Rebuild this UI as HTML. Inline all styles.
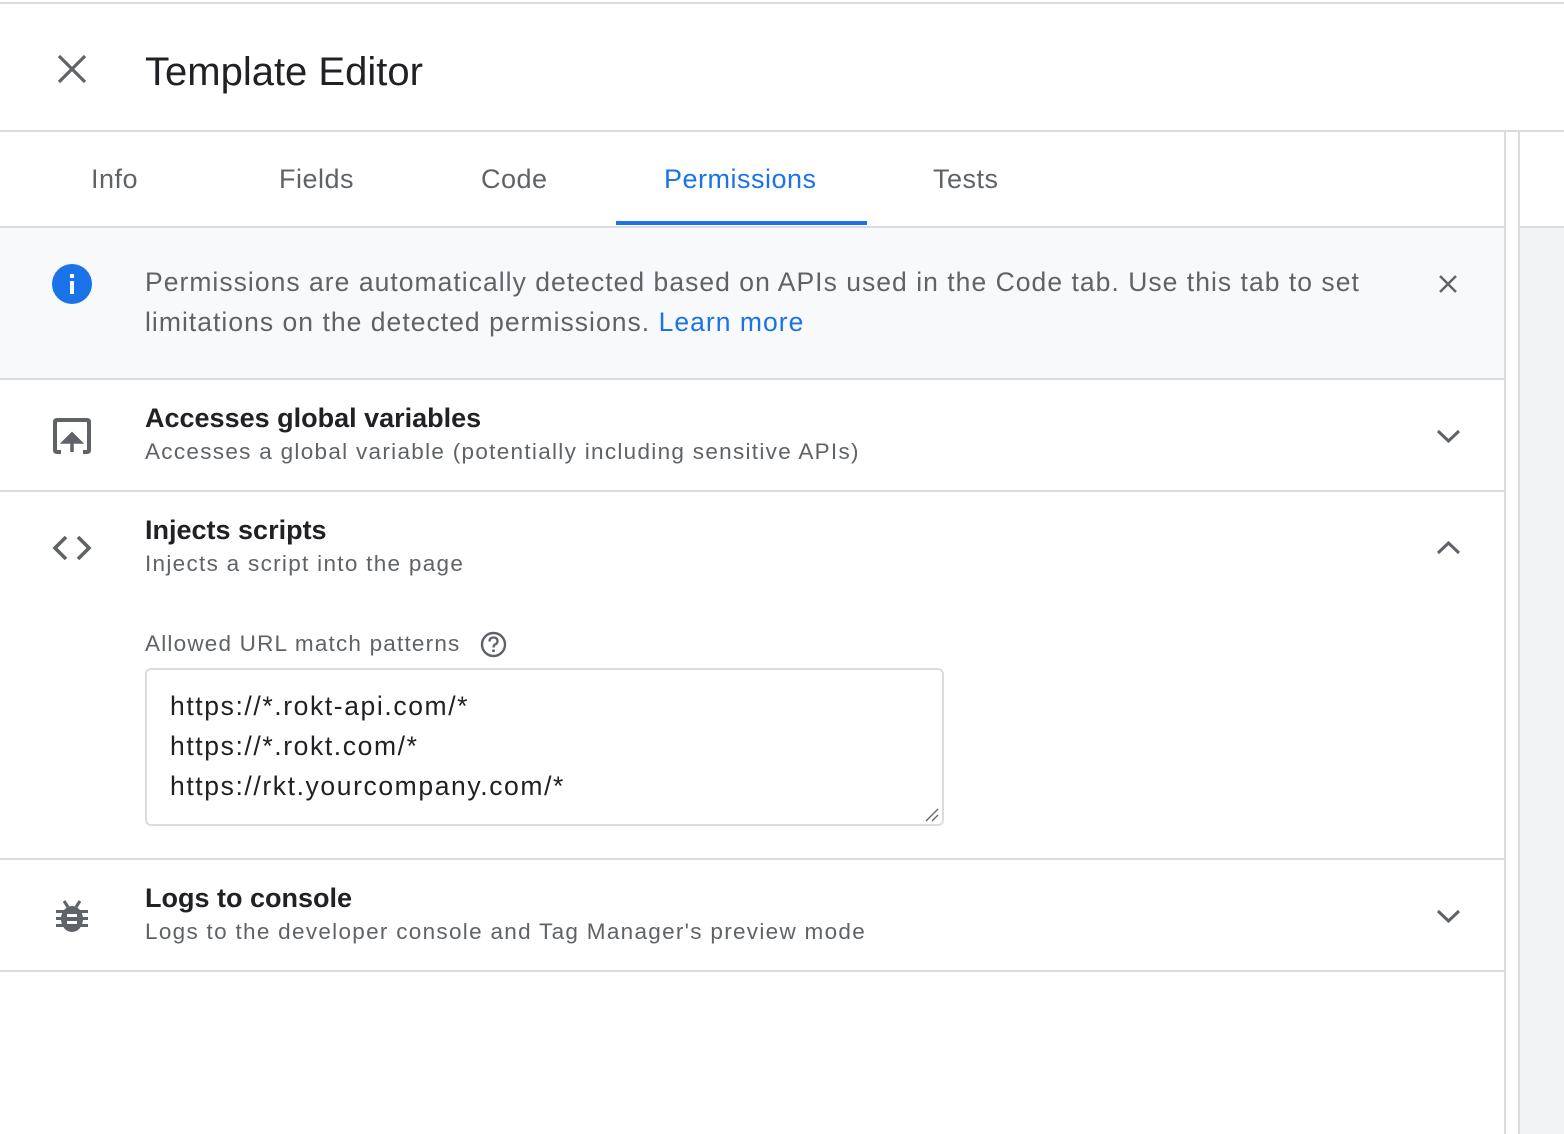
<!DOCTYPE html>
<html><head><meta charset="utf-8"><style>
*{box-sizing:border-box;margin:0;padding:0}
body{width:1564px;height:1134px;overflow:hidden;background:#fff;font-family:"Liberation Sans",Arial,sans-serif;position:relative;color:#202124}
.abs{position:absolute}
.line{position:absolute;background:#dadce0}
.tab{position:absolute;top:164px;font-size:27px;color:#5f6368;letter-spacing:0.5px}
.t{position:absolute;left:145px;font-size:27px;font-weight:bold;color:#202124;letter-spacing:0px}
.s{position:absolute;left:145px;font-size:22.5px;color:#5f6368;letter-spacing:1.3px}
</style></head><body>
<div class="line" style="left:0;top:2px;width:1564px;height:2px"></div>
<svg class="abs" style="left:56px;top:53px" width="32" height="32" viewBox="0 0 32 32"><path d="M3 3L29 29M29 3L3 29" stroke="#5f6368" stroke-width="3.2"/></svg>
<div class="abs" style="left:145px;top:50px;font-size:40px;color:#202124;letter-spacing:0px">Template Editor</div>
<div class="line" style="left:0;top:130px;width:1564px;height:2px"></div>
<div class="line" style="left:1504px;top:131px;width:2px;height:1003px"></div>
<div class="line" style="left:1518px;top:131px;width:2px;height:1003px"></div>
<div class="abs" style="left:1520px;top:228px;width:44px;height:906px;background:#f1f3f4"></div>
<div class="line" style="left:1520px;top:226px;width:44px;height:2px"></div>
<div class="tab" style="left:91px">Info</div>
<div class="tab" style="left:279px">Fields</div>
<div class="tab" style="left:481px">Code</div>
<div class="tab" style="left:664px;color:#1a73e8">Permissions</div>
<div class="tab" style="left:933px">Tests</div>
<div class="abs" style="left:616px;top:221px;width:251px;height:4px;background:#1a73e8"></div>
<div class="line" style="left:0;top:226px;width:1505px;height:2px"></div>
<div class="abs" style="left:0;top:228px;width:1504px;height:150px;background:#f8f9fa"></div>
<svg class="abs" style="left:52px;top:264px" width="40" height="40" viewBox="0 0 40 40"><circle cx="20" cy="20" r="20" fill="#1a73e8"/><rect x="18" y="17" width="4" height="13" fill="#fff"/><rect x="18" y="10" width="4" height="4" fill="#fff"/></svg>
<div class="abs" style="left:145px;top:262px;width:1290px;font-size:26.5px;line-height:40px;color:#5f6368;letter-spacing:1.03px">Permissions are automatically detected based on APIs used in the Code tab. Use this tab to set limitations on the detected permissions. <span style="color:#1a73e8">Learn more</span></div>
<svg class="abs" style="left:1438px;top:274px" width="20" height="20" viewBox="0 0 20 20"><path d="M2 2L18 18M18 2L2 18" stroke="#5f6368" stroke-width="2.4"/></svg>
<div class="line" style="left:0;top:378px;width:1505px;height:2px"></div>
<svg class="abs" style="left:53px;top:418px" width="38" height="36" viewBox="0 0 38 36"><path d="M8 34H4Q2 34 2 32V4Q2 2 4 2H34Q36 2 36 4V32Q36 34 34 34H30" fill="none" stroke="#5f6368" stroke-width="4"/><path d="M19 34V20M11 24L19 16L27 24Z" fill="#5f6368" stroke="#5f6368" stroke-width="3.5"/></svg>
<div class="t" style="top:403px">Accesses global variables</div>
<div class="s" style="top:439px">Accesses a global variable (potentially including sensitive APIs)</div>
<svg class="abs" style="left:1436px;top:428px" width="25" height="16" viewBox="0 0 25 16"><path d="M2 3L12.5 13L23 3" fill="none" stroke="#5f6368" stroke-width="3"/></svg>
<div class="line" style="left:0;top:490px;width:1505px;height:2px"></div>
<svg class="abs" style="left:52px;top:535px" width="40" height="26" viewBox="0 0 40 26"><path d="M14 2L3 13L14 24M26 2L37 13L26 24" fill="none" stroke="#5f6368" stroke-width="3.6"/></svg>
<div class="t" style="top:515px">Injects scripts</div>
<div class="s" style="top:551px">Injects a script into the page</div>
<svg class="abs" style="left:1436px;top:540px" width="25" height="16" viewBox="0 0 25 16"><path d="M2 13L12.5 3L23 13" fill="none" stroke="#5f6368" stroke-width="3"/></svg>
<div class="abs" style="left:145px;top:631px;font-size:22.5px;color:#5f6368;letter-spacing:1.2px">Allowed URL match patterns</div>
<svg class="abs" style="left:480px;top:631px" width="27" height="27" viewBox="0 0 27 27"><circle cx="13.5" cy="13.5" r="11.5" fill="none" stroke="#5f6368" stroke-width="2.4"/><path d="M9.5 10.5Q9.5 6.5 13.5 6.5Q17.5 6.5 17.5 10Q17.5 12.5 15 13.5Q13.5 14.3 13.5 16.5" fill="none" stroke="#5f6368" stroke-width="2.3"/><rect x="12.2" y="18.5" width="2.6" height="2.6" fill="#5f6368"/></svg>
<div class="abs" style="left:145px;top:668px;width:799px;height:158px;border:2px solid #dadce0;border-radius:6px"></div>
<div class="abs" style="left:170px;top:686px;font-size:26.5px;line-height:40px;color:#202124;letter-spacing:1.6px">https://*.rokt-api.com/*<br>https://*.rokt.com/*<br>https://rkt.yourcompany.com/*</div>
<svg class="abs" style="left:925px;top:808px" width="14" height="14" viewBox="0 0 14 14"><path d="M1 13L13 1M7 13L13 7" stroke="#5f6368" stroke-width="1.3"/></svg>
<div class="line" style="left:0;top:858px;width:1505px;height:2px"></div>
<svg class="abs" style="left:54px;top:898px" width="36" height="36" viewBox="0 0 36 36"><path d="M10 3L14 9M26 3L22 9" stroke="#5f6368" stroke-width="3"/><ellipse cx="18" cy="21" rx="11" ry="13" fill="#5f6368"/><rect x="2" y="12" width="32" height="3" fill="#5f6368"/><rect x="2" y="19" width="32" height="3" fill="#5f6368"/><rect x="2" y="26" width="32" height="3" fill="#5f6368"/><rect x="13" y="16" width="10" height="3" fill="#fff"/><rect x="13" y="23" width="10" height="3" fill="#fff"/></svg>
<div class="t" style="top:883px">Logs to console</div>
<div class="s" style="top:919px">Logs to the developer console and Tag Manager's preview mode</div>
<svg class="abs" style="left:1436px;top:908px" width="25" height="16" viewBox="0 0 25 16"><path d="M2 3L12.5 13L23 3" fill="none" stroke="#5f6368" stroke-width="3"/></svg>
<div class="line" style="left:0;top:970px;width:1505px;height:2px"></div>
</body></html>
